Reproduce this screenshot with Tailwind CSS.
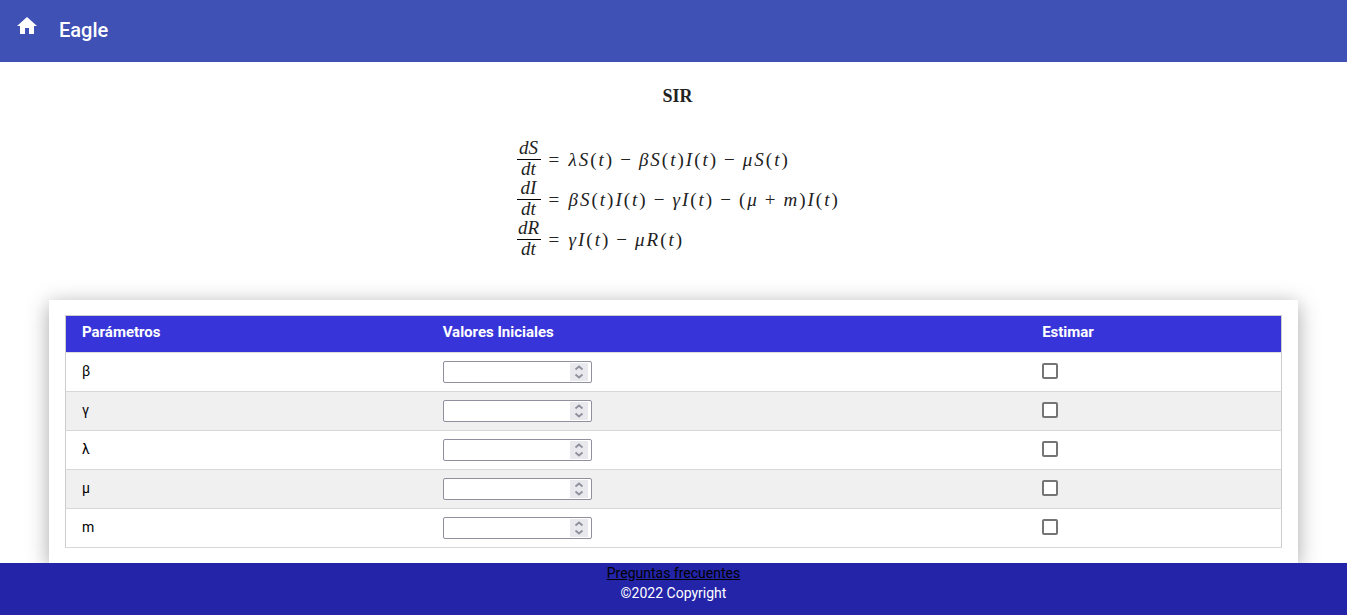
<!DOCTYPE html>
<html lang="es">
<head>
<meta charset="utf-8">
<meta name="viewport" content="width=device-width, initial-scale=1">
<title>Eagle</title>
<script src="https://cdn.jsdelivr.net/npm/@tailwindcss/browser@4"></script>
</head>
<body class="flex h-screen flex-col bg-white font-['Roboto',sans-serif] text-sm text-black">
<svg class="hidden" aria-hidden="true">
  <symbol id="spin" viewBox="0 0 18 18"><path d="M5.500 6.500 9 3.500l3.500 3M5.500 11.500 9 14.500l3.500-3" fill="none" stroke="#8f8f9d" stroke-width="1.800"/></symbol>
</svg>
<header class="flex h-[62px] shrink-0 items-center gap-5 bg-[#3f51b5] px-[15px] pb-0.5 text-white">
  <a href="#" aria-label="Inicio" class="pb-2"><svg class="h-6 w-6" viewBox="0 0 24 24" fill="currentColor"><path d="M10 20v-6h4v6h5v-8h3L12 3 2 12h3v8z"/></svg></a>
  <h1 class="text-xl font-medium">Eagle</h1>
</header>
<main class="min-h-0 flex-1 overflow-hidden">
  <section class="h-[238px] pt-6 font-['Liberation_Serif',serif] text-[#222]">
    <h2 class="pl-2 text-center text-lg leading-5 font-bold">SIR</h2>
    <div class="mx-auto mt-8 grid w-[318px] grid-cols-[26px_1fr] gap-x-2 text-[19px] leading-5 whitespace-nowrap">
      <div class="flex h-10 flex-col items-end italic"><span class="w-6 border-b border-black pb-px text-center leading-5">dS</span><span class="w-6 text-center leading-[18px]">dt</span></div>
      <div class="flex items-center gap-2 pt-1"><span class="w-3">=</span><span class="flex gap-0.5"><i>λ</i><i>S</i><span>(</span><i>t</i><span>)</span></span><span>−</span><span class="flex gap-0.5"><i>β</i><i>S</i><span>(</span><i>t</i><span>)</span><i>I</i><span>(</span><i>t</i><span>)</span></span><span>−</span><span class="flex gap-0.5"><i>μ</i><i>S</i><span>(</span><i>t</i><span>)</span></span></div>
      <div class="flex h-10 flex-col items-end italic"><span class="w-6 border-b border-black pb-px text-center leading-5">dI</span><span class="w-6 text-center leading-[18px]">dt</span></div>
      <div class="flex items-center gap-2 pt-1"><span class="w-3">=</span><span class="flex gap-0.5"><i>β</i><i>S</i><span>(</span><i>t</i><span>)</span><i>I</i><span>(</span><i>t</i><span>)</span></span><span>−</span><span class="flex gap-0.5"><i>γ</i><i>I</i><span>(</span><i>t</i><span>)</span></span><span>−</span><span class="flex gap-0.5"><span>(</span><i>μ</i></span><span>+</span><span class="flex gap-0.5"><i>m</i><span>)</span><i>I</i><span>(</span><i>t</i><span>)</span></span></div>
      <div class="flex h-10 flex-col items-end italic"><span class="w-6 border-b border-black pb-px text-center leading-5">dR</span><span class="w-6 text-center leading-[18px]">dt</span></div>
      <div class="flex items-center gap-2 pt-1"><span class="w-3">=</span><span class="flex gap-0.5"><i>γ</i><i>I</i><span>(</span><i>t</i><span>)</span></span><span>−</span><span class="flex gap-0.5"><i>μ</i><i>R</i><span>(</span><i>t</i><span>)</span></span></div>
    </div>
  </section>
  <section class="mx-[49px] bg-white p-4 pt-[15px] shadow-[0_4px_20px_rgba(0,0,0,0.35)]">
    <table class="w-full table-fixed border-collapse border border-[#ccc] text-left">
      <colgroup><col class="w-[29.7%]"><col class="w-[49.3%]"><col class="w-[21%]"></colgroup>
      <thead><tr class="h-[37px] border-b border-[#ddd] bg-[#3735d9] text-[15px] text-white"><th class="px-4 pb-0.5 font-bold">Parámetros</th><th class="px-4 pb-0.5 font-bold">Valores Iniciales</th><th class="px-4 pb-0.5 font-bold">Estimar</th></tr></thead>
      <tbody>
        <tr class="h-[39px] border-b border-[#d8d8d8]"><td class="px-4 pb-0.5"><label for="v1">β</label></td><td class="px-4"><span class="relative block w-[149px]"><input id="v1" type="number" class="block h-[22px] w-full rounded-xs border border-[#8f8f9d] bg-white px-1 [appearance:textfield]"><svg class="pointer-events-none absolute top-0.5 right-1 size-[18px] bg-[#e9e9ed]" aria-hidden="true"><use href="#spin"/></svg></span></td><td class="px-4 pb-0.5"><input type="checkbox" aria-label="Estimar β" class="block size-4 appearance-none rounded-xs border-2 border-[#757575] bg-white checked:bg-[#3f51b5]"></td></tr>
        <tr class="h-[39px] border-b border-[#d8d8d8] bg-[#f0f0f0]"><td class="px-4 pb-0.5"><label for="v2">γ</label></td><td class="px-4"><span class="relative block w-[149px]"><input id="v2" type="number" class="block h-[22px] w-full rounded-xs border border-[#8f8f9d] bg-white px-1 [appearance:textfield]"><svg class="pointer-events-none absolute top-0.5 right-1 size-[18px] bg-[#e9e9ed]" aria-hidden="true"><use href="#spin"/></svg></span></td><td class="px-4 pb-0.5"><input type="checkbox" aria-label="Estimar γ" class="block size-4 appearance-none rounded-xs border-2 border-[#757575] bg-white checked:bg-[#3f51b5]"></td></tr>
        <tr class="h-[39px] border-b border-[#d8d8d8]"><td class="px-4 pb-0.5"><label for="v3">λ</label></td><td class="px-4"><span class="relative block w-[149px]"><input id="v3" type="number" class="block h-[22px] w-full rounded-xs border border-[#8f8f9d] bg-white px-1 [appearance:textfield]"><svg class="pointer-events-none absolute top-0.5 right-1 size-[18px] bg-[#e9e9ed]" aria-hidden="true"><use href="#spin"/></svg></span></td><td class="px-4 pb-0.5"><input type="checkbox" aria-label="Estimar λ" class="block size-4 appearance-none rounded-xs border-2 border-[#757575] bg-white checked:bg-[#3f51b5]"></td></tr>
        <tr class="h-[39px] border-b border-[#d8d8d8] bg-[#f0f0f0]"><td class="px-4 pb-0.5"><label for="v4">μ</label></td><td class="px-4"><span class="relative block w-[149px]"><input id="v4" type="number" class="block h-[22px] w-full rounded-xs border border-[#8f8f9d] bg-white px-1 [appearance:textfield]"><svg class="pointer-events-none absolute top-0.5 right-1 size-[18px] bg-[#e9e9ed]" aria-hidden="true"><use href="#spin"/></svg></span></td><td class="px-4 pb-0.5"><input type="checkbox" aria-label="Estimar μ" class="block size-4 appearance-none rounded-xs border-2 border-[#757575] bg-white checked:bg-[#3f51b5]"></td></tr>
        <tr class="h-[39px] border-b border-[#d8d8d8]"><td class="px-4 pb-0.5"><label for="v5">m</label></td><td class="px-4"><span class="relative block w-[149px]"><input id="v5" type="number" class="block h-[22px] w-full rounded-xs border border-[#8f8f9d] bg-white px-1 [appearance:textfield]"><svg class="pointer-events-none absolute top-0.5 right-1 size-[18px] bg-[#e9e9ed]" aria-hidden="true"><use href="#spin"/></svg></span></td><td class="px-4 pb-0.5"><input type="checkbox" aria-label="Estimar m" class="block size-4 appearance-none rounded-xs border-2 border-[#757575] bg-white checked:bg-[#3f51b5]"></td></tr>
      </tbody>
    </table>
  </section>
</main>
<footer class="z-10 h-[52px] shrink-0 bg-[#2424a9] text-center leading-5 text-white">
  <a href="#" class="text-black underline">Preguntas frecuentes</a>
  <p>©2022 Copyright</p>
</footer>
</body>
</html>
